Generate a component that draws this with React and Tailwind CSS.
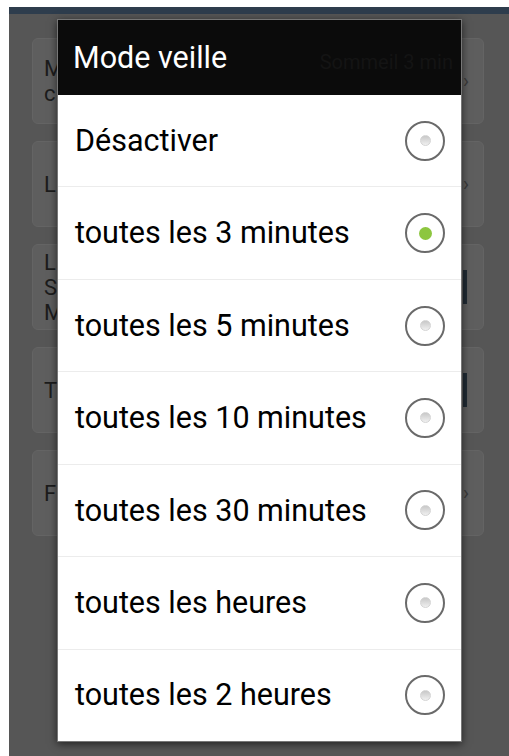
import React from "react";

const options = [
  "Désactiver",
  "toutes les 3 minutes",
  "toutes les 5 minutes",
  "toutes les 10 minutes",
  "toutes les 30 minutes",
  "toutes les heures",
  "toutes les 2 heures",
];

function Radio({ checked }) {
  return (
    <div className="w-[40px] h-[40px] rounded-full border-2 border-[#6a6a6a] flex items-center justify-center bg-white">
      {checked ? (
        <div className="w-[13px] h-[13px] rounded-full bg-[#8dc63f]" />
      ) : (
        <div className="w-[11px] h-[11px] rounded-full bg-gradient-to-b from-[#c8c8c8] to-[#f0f0f0] border border-[#d4d4d4]" />
      )}
    </div>
  );
}

function Card({ lines, right }) {
  return (
    <div className="h-[86px] rounded-[6px] bg-[#5e5e5e] border border-[#646464] flex items-center justify-between pl-[11px] pr-[14px]">
      <div className="text-[22px] leading-[25px] text-[#1c1c1c]">
        {lines.map((l, i) => (
          <div key={i}>{l}</div>
        ))}
      </div>
      {right === "chev" && <div className="text-[20px] text-[#3a3a3a]">›</div>}
      {right === "bar" && <div className="w-[4px] h-[34px] bg-[#1f2a33] mr-[2px]" />}
    </div>
  );
}

export default function App() {
  return (
    <div
      className="w-[509px] h-[756px] bg-white pl-[9px] pt-[7px] relative overflow-hidden"
      style={{ fontFamily: "Roboto, 'Noto Sans', sans-serif" }}
    >
      <div className="w-full h-full bg-[#565656] flex flex-col">
        <div className="h-[7px] bg-[#2e3d4d]" />
        <div className="flex flex-col gap-[17px] pl-[23px] pr-[25px] pt-[24px]">
          <Card lines={["M", "c"]} right="chev" />
          <Card lines={["L"]} right="chev" />
          <Card lines={["L", "S", "M"]} right="bar" />
          <Card lines={["T"]} right="bar" />
          <Card lines={["F"]} right="chev" />
        </div>
      </div>

      <div className="absolute left-[57px] top-[19px] w-[405px] h-[723px] flex flex-col shadow-[0_2px_8px_rgba(0,0,0,0.6)] border border-[#777]">
        <div className="h-[75px] bg-[#0b0b0b] flex items-center justify-between pl-[15px] pr-[8px] overflow-hidden">
          <span className="text-[30.5px] text-white">Mode veille</span>
          <span className="text-[20px] whitespace-nowrap text-[#141414] mt-[8px]">Sommeil 3 min</span>
        </div>
        <div className="flex-1 bg-white flex flex-col">
          {options.map((o, i) => (
            <div
              key={o}
              className={`flex-1 flex items-center justify-between pl-[17px] pr-[16px] ${i < options.length - 1 ? "border-b border-[#ececec]" : ""}`}
            >
              <span className="text-[30.5px] text-black">{o}</span>
              <Radio checked={i === 1} />
            </div>
          ))}
        </div>
      </div>
    </div>
  );
}
